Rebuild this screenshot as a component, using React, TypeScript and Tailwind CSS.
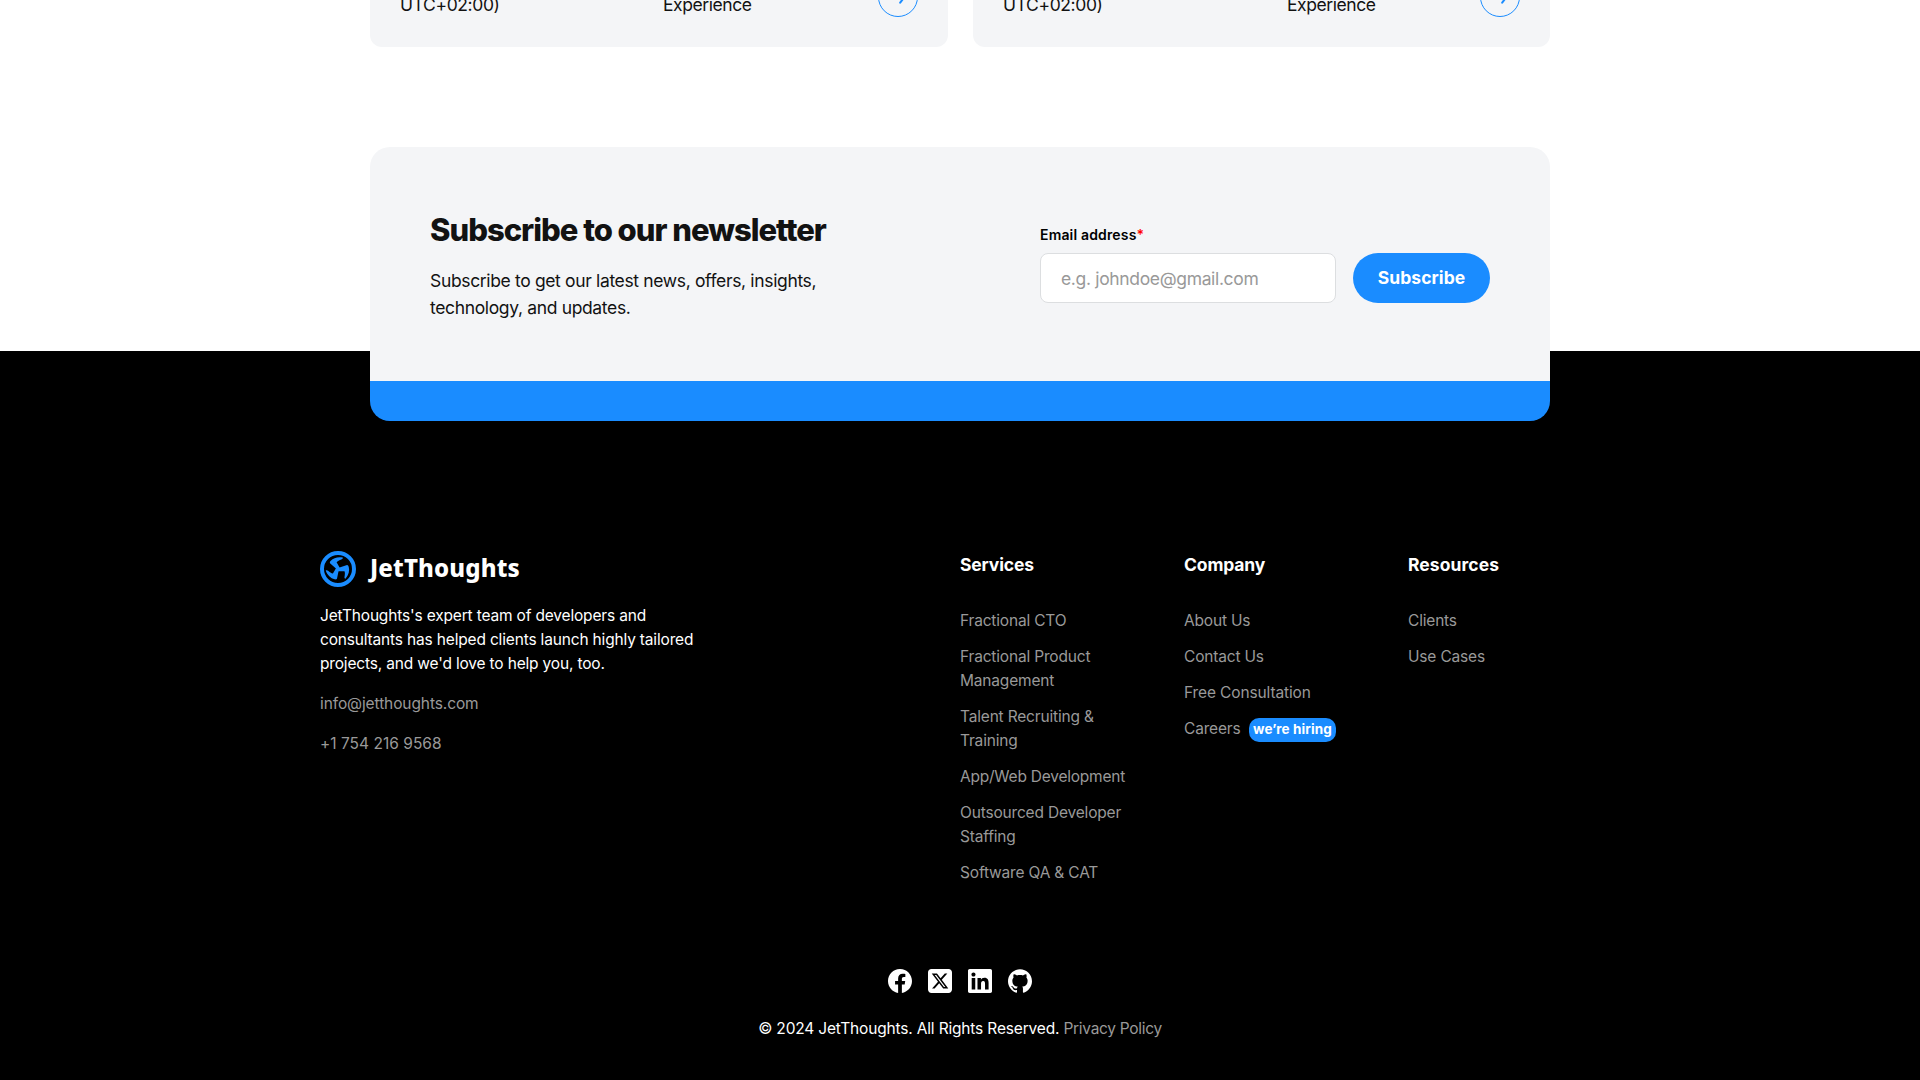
import type { ReactNode } from "react";
import { BsFacebook } from "react-icons/bs";
import { FaLinkedin, FaSquareXTwitter } from "react-icons/fa6";
import { SiGithub } from "react-icons/si";

function CaseCard({ className }: { className: string }) {
  return (
    <article
      className={`grid h-[140px] items-end rounded-xl bg-[#f4f5f7] px-[30px] pb-[29px] text-[17.5px] leading-[27px] text-[#121212] ${className}`}
    >
      <span className="tracking-[-0.38px]">UTC+02:00)</span>
      <span className="tracking-[-0.42px]">Experience</span>
      <span className="mb-px flex size-10 items-center justify-center rounded-full border border-[#1a8cff]">
        <svg
          viewBox="0 0 16 16"
          className="size-4 fill-none stroke-[#1a8cff] stroke-2"
          strokeLinecap="round"
          strokeLinejoin="round"
        >
          <path d="M1.5 8H14M9 2.2L14.5 8L10.2 13.6" />
        </svg>
      </span>
    </article>
  );
}

function LogoMark() {
  const blade =
    "M18.2 19.5L10 12.2C9.6 11.4 10 10.6 10.8 9.8C13.4 7 18 5.6 22.8 6.6C23 7.6 22.4 8.2 21.4 8.5C19.4 9.2 17.6 10 16.6 11.3L20 17.2Z";
  return (
    <svg viewBox="0 0 36 36" className="size-9 fill-[#1a8cff]">
      <circle cx="18" cy="18" r="16" className="fill-none stroke-[#1a8cff] stroke-4" />
      <path d={blade} />
      <path d={blade} transform="rotate(120 18 18)" />
      <path d={blade} transform="rotate(240 18 18)" />
    </svg>
  );
}

function Column({ title, titleClass, children }: { title: string; titleClass: string; children: ReactNode }) {
  return (
    <nav className="w-56 shrink-0">
      <h3 className={`text-[17.5px] font-bold leading-[27px] text-white ${titleClass}`}>{title}</h3>
      <ul className="mt-[31px] flex flex-col gap-3 text-[15.5px] leading-6 tracking-[-0.18px] text-[#999]">
        {children}
      </ul>
    </nav>
  );
}

export default function App() {
  return (
    <div className="flex h-[1080px] w-full flex-col overflow-hidden bg-white font-['Inter',sans-serif] antialiased">
      <main className="relative z-10 mx-auto h-[351px] w-[1180px] shrink-0">
        <div className="-mt-[93px] flex justify-between">
          <CaseCard className="w-[578px] grid-cols-[263px_215px_40px]" />
          <CaseCard className="w-[577px] grid-cols-[284px_193px_40px]" />
        </div>

        <section className="mt-[100px]">
          <div className="flex h-[234px] justify-between rounded-t-[20px] bg-[#f4f5f7] px-[60px] pt-16">
            <div>
              <h2 className="text-[31px] font-extrabold leading-[38px] tracking-[-1.01px] text-[#121212]">
                Subscribe to our newsletter
              </h2>
              <p className="mt-[18px] text-[17.5px] leading-[27px] tracking-[-0.35px] text-[#121212]">
                Subscribe to get our latest news, offers, insights,
                <br />
                technology, and updates.
              </p>
            </div>
            <form className="flex items-start gap-[17px] pt-[14px]">
              <label className="block w-[296px]">
                <span className="block text-[14px] font-semibold leading-5 tracking-[0.16px] text-black">
                  Email address<span className="text-[#ff0000]">*</span>
                </span>
                <input
                  type="email"
                  placeholder="e.g. johndoe@gmail.com"
                  className="mt-2 block h-[50px] w-full rounded-lg border border-[#dcdee0] bg-white px-5 text-[17.5px] tracking-[-0.34px] placeholder:text-[#999]"
                />
              </label>
              <button
                type="button"
                className="mt-7 h-[50px] w-[137px] rounded-full bg-[#1a8cff] text-[17.5px] font-bold tracking-[0.06px] text-white"
              >
                Subscribe
              </button>
            </form>
          </div>
          <div className="h-10 rounded-b-[20px] bg-[#1a8cff]" />
        </section>
      </main>

      <footer className="h-[729px] shrink-0 bg-black pt-[200px]">
        <div className="mx-auto flex h-[417px] w-[1280px]">
          <div className="w-[640px] shrink-0 text-[15.5px] leading-6">
            <div className="flex h-9 items-center gap-[14px]">
              <LogoMark />
              <span className="-mt-0.5 font-['Noto_Sans',sans-serif] text-[24px] font-extrabold leading-9 tracking-[0.15px] text-white">
                JetThoughts
              </span>
            </div>
            <p className="mt-[17px] tracking-[-0.17px] text-white">
              JetThoughts's expert team of developers and
              <br />
              consultants has helped clients launch highly tailored
              <br />
              projects, and we'd love to help you, too.
            </p>
            <p className="mt-4 tracking-[-0.1px] text-[#999]">info@jetthoughts.com</p>
            <p className="mt-4 tracking-[0.02px] text-[#999]">+1 754 216 9568</p>
          </div>
          <Column title="Services" titleClass="tracking-[-0.15px]">
            <li>Fractional CTO</li>
            <li>
              Fractional Product
              <br />
              Management
            </li>
            <li>
              Talent Recruiting &amp;
              <br />
              Training
            </li>
            <li className="tracking-[-0.23px]">App/Web Development</li>
            <li>
              Outsourced Developer
              <br />
              Staffing
            </li>
            <li>Software QA &amp; CAT</li>
          </Column>
          <Column title="Company" titleClass="tracking-[-0.14px]">
            <li>About Us</li>
            <li>Contact Us</li>
            <li className="tracking-[-0.13px]">Free Consultation</li>
            <li className="flex h-6">
              <span className="w-[65px]">Careers</span>
              <span className="mt-px flex h-6 w-[87px] items-center justify-center rounded-[10px] bg-[#1a8cff] pb-0.5 text-[13.5px] font-bold tracking-[0.12px] text-white">
                we’re hiring
              </span>
            </li>
          </Column>
          <Column title="Resources" titleClass="tracking-[0.08px]">
            <li>Clients</li>
            <li>Use Cases</li>
          </Column>
        </div>

        <div className="mt-px flex justify-center gap-4 text-white">
          <BsFacebook className="size-6" />
          <FaSquareXTwitter className="size-6" viewBox="0 32 448 448" />
          <FaLinkedin className="size-6" viewBox="0 32 448 448" />
          <SiGithub className="size-6" />
        </div>
        <p className="mt-6 text-center text-[15.5px] leading-6 tracking-[-0.17px] text-white">
          © 2024 JetThoughts. All Rights Reserved.{" "}
          <span className="tracking-[-0.3px] text-[#999]">Privacy Policy</span>
        </p>
      </footer>
    </div>
  );
}
